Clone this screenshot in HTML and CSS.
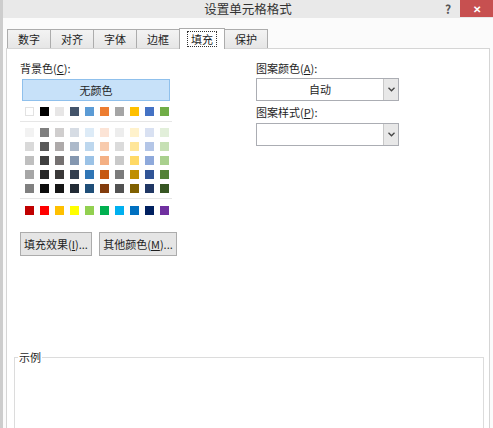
FILE: index.html
```html
<!DOCTYPE html>
<html>
<head>
    <title>设置单元格格式</title>
    <meta charset="UTF-8">
    <link rel="stylesheet" href="styles.css">
</head>
<body>
    <div class="window">
        <div class="titlebar">
            <div class="title">设置单元格格式</div>
            <div class="help">?</div>
            <div class="close">✕</div>
        </div>
        <div class="main">
            <div class="tabs">
                <div class="tab">数字</div>
                <div class="tab">对齐</div>
                <div class="tab">字体</div>
                <div class="tab">边框</div>
                <div class="tab active"><span>填充</span></div>
                <div class="tab">保护</div>
            </div>
            <div class="panel">
                <div class="cols">
                    <div class="left">
                        <div class="label">背景色(<u>C</u>):</div>
                        <div class="nocolor">无颜色</div>
                        <div class="swatches" id="themeRow"></div>
                        <div class="sep"></div>
                        <div class="swatches" id="tintRows"></div>
                        <div class="sep"></div>
                        <div class="swatches" id="stdRow"></div>
                        <div class="btns">
                            <div class="btn btn-fx">填充效果(<u>I</u>)...</div>
                            <div class="btn btn-more">其他颜色(<u>M</u>)...</div>
                        </div>
                    </div>
                    <div class="right">
                        <div class="label">图案颜色(<u>A</u>):</div>
                        <div class="combo">
                            <div class="combo-text">自动</div>
                            <div class="combo-arrow"><svg width="7" height="5" viewBox="0 0 7 5"><path d="M0.5 0.8 L3.5 3.8 L6.5 0.8" fill="none" stroke="#444" stroke-width="1.3"/></svg></div>
                        </div>
                        <div class="label label-2">图案样式(<u>P</u>):</div>
                        <div class="combo combo-2">
                            <div class="combo-text"></div>
                            <div class="combo-arrow"><svg width="7" height="5" viewBox="0 0 7 5"><path d="M0.5 0.8 L3.5 3.8 L6.5 0.8" fill="none" stroke="#444" stroke-width="1.3"/></svg></div>
                        </div>
                    </div>
                </div>
                <fieldset class="sample">
                    <legend>示例</legend>
                </fieldset>
            </div>
        </div>
    </div>

<script>
    const theme = ['#FFFFFF', '#000000', '#E7E6E6', '#44546A', '#5B9BD5', '#ED7D31', '#A5A5A5', '#FFC000', '#4472C4', '#70AD47'];
    const tints = [
        ['#F2F2F2', '#7F7F7F', '#D0CECE', '#D6DCE4', '#DDEBF7', '#FCE4D6', '#EDEDED', '#FFF2CC', '#D9E1F2', '#E2EFDA'],
        ['#D9D9D9', '#595959', '#AEAAAA', '#ACB9CA', '#BDD7EE', '#F8CBAD', '#DBDBDB', '#FFE699', '#B4C6E7', '#C6E0B4'],
        ['#BFBFBF', '#404040', '#757171', '#8497B0', '#9BC2E6', '#F4B084', '#C9C9C9', '#FFD966', '#8EA9DB', '#A9D08E'],
        ['#A6A6A6', '#262626', '#3A3838', '#333F4F', '#2F75B5', '#C65911', '#7B7B7B', '#BF8F00', '#305496', '#548235'],
        ['#808080', '#0D0D0D', '#161616', '#222B35', '#1F4E78', '#833C0C', '#525252', '#806000', '#203764', '#375623']
    ];
    const standard = ['#C00000', '#FF0000', '#FFC000', '#FFFF00', '#92D050', '#00B050', '#00B0F0', '#0070C0', '#002060', '#7030A0'];

    function fill(id, colors) {
        const box = document.getElementById(id);
        for (const c of colors) {
            const sw = document.createElement('div');
            sw.className = 'sw';
            sw.style.background = c;
            box.appendChild(sw);
        }
    }

    fill('themeRow', theme);
    fill('tintRows', tints.flat());
    fill('stdRow', standard);
</script>
</body>
</html>
```

FILE: styles.css
```css
body { margin: 0; font-family: "Noto Sans CJK SC", "Noto Sans", sans-serif; font-size: 11px; color: #1e1e1e; background: #fff; }
u { text-decoration: underline; }

.window {
    width: 493px;
    height: 428px;
    overflow: hidden;
    box-sizing: border-box;
    border-left: 3px solid #cdcdcd;
    background: #fbfbfb;
}

.titlebar { height: 18px; background: #e9e9e9; display: flex; align-items: center; }
.title { flex: 1; text-align: center; padding-left: 48px; font-size: 12.5px; color: #333; line-height: 18px; }
.help { width: 12px; font-size: 12px; font-weight: bold; color: #555; line-height: 18px; }
.close {
    width: 33px;
    height: 17px;
    margin-left: 3px;
    align-self: flex-start;
    background: #c75050;
    color: #fff;
    font-size: 10px;
    font-weight: bold;
    text-align: center;
    line-height: 17px;
}

.main { padding: 10px 3px 0 3px; }

.tabs { display: flex; align-items: flex-end; height: 20px; padding-left: 2px; }
.tab {
    height: 19px;
    box-sizing: border-box;
    padding: 0 10px;
    margin-left: -1px;
    border: 1px solid #acacac;
    border-bottom: none;
    background: linear-gradient(#f3f3f3, #e6e6e6);
    line-height: 18px;
}
.tab.active {
    height: 21px;
    margin-bottom: -1px;
    padding: 0 7px;
    background: #fff;
    position: relative;
    z-index: 1;
}
.tab.active span { display: inline-block; border: 1px dotted #333; padding: 0 3px; line-height: 14px; margin-top: 2px; }

.panel {
    height: 400px;
    box-sizing: border-box;
    border: 1px solid #d5d5d5;
    background: #fff;
    padding: 11px 5px 0 7px;
}

.cols { display: flex; padding-left: 6px; }
.left { width: 236px; }
.right { width: 143px; }

.label { line-height: 16px; }

.nocolor {
    width: 148px;
    height: 22px;
    box-sizing: border-box;
    margin: 3px 0 0 2px;
    border: 1px solid #8fc0ec;
    background: #c7e1f9;
    text-align: center;
    line-height: 20px;
}

.swatches {
    display: grid;
    grid-template-columns: repeat(10, 9px);
    column-gap: 6px;
    row-gap: 5px;
    padding-left: 5px;
    margin-top: 6px;
}
.sw { width: 9px; height: 9px; box-sizing: border-box; }
#themeRow .sw:first-child { border: 1px solid #e2e2e2; }
#tintRows { margin-top: 6px; }
#stdRow { margin-top: 7px; }

.sep { width: 152px; height: 1px; background: #e6e6e6; margin-top: 5px; }

.btns { display: flex; gap: 7px; margin-top: 17px; }
.btn {
    height: 24px;
    box-sizing: border-box;
    border: 1px solid #acacac;
    background: #e5e5e5;
    text-align: center;
    line-height: 22px;
}
.btn-fx { width: 72px; }
.btn-more { width: 78px; }

.combo {
    height: 23px;
    box-sizing: border-box;
    margin-top: 2px;
    border: 1px solid #abadb3;
    display: flex;
    background: #fff;
}
.combo-text { flex: 1; text-align: center; line-height: 21px; }
.combo-arrow {
    width: 14px;
    border-left: 1px solid #c8c8c8;
    background: #e8e8e8;
    display: flex;
    align-items: center;
    justify-content: center;
}
.label-2 { margin-top: 3px; }
.combo-2 { margin-top: 3px; }

.sample {
    margin: 93px 0 0 0;
    padding: 0 3px;
    height: 120px;
    width: 470px;
    box-sizing: border-box;
    border: 1px solid #dcdcdc;
}
.sample legend { padding: 0 1px; line-height: 16px; }
```
